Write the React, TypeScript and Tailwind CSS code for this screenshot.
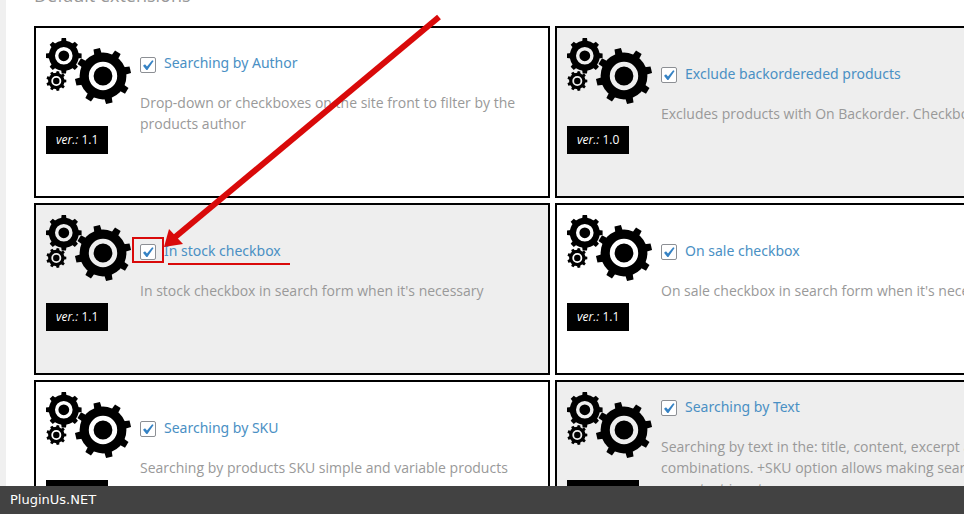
import { useState } from "react";

type Extension = {
  id: string;
  title: string;
  text: string;
  version: string;
  shaded?: boolean;
};

const EXTENSIONS: Extension[] = [
  { id: "author", title: "Searching by Author", text: "Drop-down or checkboxes on the site front to filter by the products author", version: "1.1" },
  { id: "backorder", title: "Exclude backordereded products", text: "Excludes products with On Backorder. Checkbox in form", version: "1.0", shaded: true },
  { id: "stock", title: "In stock checkbox", text: "In stock checkbox in search form when it's necessary", version: "1.1", shaded: true },
  { id: "sale", title: "On sale checkbox", text: "On sale checkbox in search form when it's necessary", version: "1.1" },
  { id: "sku", title: "Searching by SKU", text: "Searching by products SKU simple and variable products", version: "1.1" },
  { id: "text", title: "Searching by Text", text: "Searching by text in the: title, content, excerpt and their combinations. +SKU option allows making search using the same text input", version: "1.1.1", shaded: true },
];

type GearProps = { cx: number; cy: number; r: number; tip: number; tooth: number; ring: number; stroke: number; teeth: number; turn: number };

// The ring is cut out with a mask so that the card colour shows through it.
function Gear({ cx, cy, r, tip, tooth, ring, stroke, teeth, turn }: GearProps) {
  const maskId = `ring-${cx}-${cy}`;
  return (
    <g transform={`translate(${cx} ${cy})`}>
      <mask id={maskId} maskUnits="userSpaceOnUse" x={-tip - 2} y={-tip - 2} width={tip * 2 + 4} height={tip * 2 + 4}>
        <rect x={-tip - 2} y={-tip - 2} width={tip * 2 + 4} height={tip * 2 + 4} fill="#fff" />
        <circle r={ring} fill="none" stroke="#000" strokeWidth={stroke} />
      </mask>
      <g mask={`url(#${maskId})`}>
        <circle r={r} />
        {Array.from({ length: teeth }, (_, i) => (
          <path
            key={i}
            d={`M${-tooth / 2 - 0.5} ${-r + 1.5}L${-tooth / 2} ${-tip}H${tooth / 2}L${tooth / 2 + 0.5} ${-r + 1.5}Z`}
            transform={`rotate(${turn + (i * 360) / teeth})`}
          />
        ))}
      </g>
    </g>
  );
}

function Gears() {
  return (
    <svg viewBox="0 0 85 66" className="h-[66px] w-[85px]" aria-hidden="true">
      <Gear cx={17.8} cy={17.8} r={15} tip={17.8} tooth={4.4} ring={7.1} stroke={3.4} teeth={8} turn={0} />
      <Gear cx={10.3} cy={43} r={8.2} tip={10} tooth={2.6} ring={4.1} stroke={1.8} teeth={9} turn={10} />
      <Gear cx={57} cy={38} r={23.4} tip={28} tooth={6.6} ring={11.8} stroke={4.8} teeth={8} turn={-13} />
    </svg>
  );
}

// Hand-drawn style pointer: box round the tick box, underline and arrow.
function Pointer() {
  return (
    <>
      <span className="pointer-events-none absolute -top-[7px] -left-2 h-[26px] w-8 border-2 border-[#d90a0a]" />
      <span className="pointer-events-none absolute top-[19px] left-7 h-0.5 w-[122px] bg-[#d90a0a]" />
      <svg viewBox="0 0 280 236" className="pointer-events-none absolute -top-[230px] left-[22px] z-10 h-[236px] w-[280px]" aria-hidden="true">
        <path d="M277 3L12 224" stroke="#d90a0a" strokeWidth="6" />
        <path d="M2 233L7 215L21 230Z" fill="#d90a0a" />
      </svg>
    </>
  );
}

function ExtensionCard({ ext, checked, onToggle }: { ext: Extension; checked: boolean; onToggle: () => void }) {
  return (
    <li className={`min-h-[172px] border-2 border-black p-2.5 ${ext.shaded ? "bg-[#eeeeee]" : "bg-white"}`}>
      <div className="flex items-center gap-[9px]">
        <div className="flex shrink-0 flex-col items-start gap-[22px]">
          <Gears />
          <span className="bg-black px-2.5 text-xs leading-7 text-white">
            <em>ver.:</em> {ext.version}
          </span>
        </div>
        <div className="min-w-0 pb-1.5">
          <div className="relative flex items-center gap-2">
            <span className="relative top-0.5 grid h-4 w-4 shrink-0">
              <input
                id={ext.id}
                type="checkbox"
                checked={checked}
                onChange={onToggle}
                className="col-start-1 row-start-1 h-4 w-4 appearance-none rounded-[2px] border border-[#8c8f94] bg-white"
              />
              {checked && (
                <svg viewBox="0 0 16 16" className="pointer-events-none col-start-1 row-start-1 h-4 w-4" aria-hidden="true">
                  <path d="M3 8.8L5 7.3L7 9.5L12.2 3.2L13.6 4L7.4 13H6.4Z" fill="#3582c4" />
                </svg>
              )}
              {ext.id === "stock" && <Pointer />}
            </span>
            <label htmlFor={ext.id} className="font-['Noto_Sans',sans-serif] text-[#4a90c4]">{ext.title}</label>
          </div>
          <p className="mt-[19px] text-[#999999]">{ext.text}</p>
        </div>
      </div>
    </li>
  );
}

export default function App() {
  const [enabled, setEnabled] = useState<string[]>(EXTENSIONS.map((ext) => ext.id));

  const toggle = (id: string) =>
    setEnabled((ids) => (ids.includes(id) ? ids.filter((item) => item !== id) : [...ids, id]));

  return (
    <div className="flex h-screen flex-col overflow-hidden bg-[#f0f0f0] font-['Open_Sans',sans-serif] text-sm leading-[21px]">
      <main className="ml-1.5 min-h-0 flex-1 overflow-hidden bg-white pl-7">
        <h2 className="-mt-[17px] mb-[19px] text-lg leading-6 text-[#999999]">Default extensions</h2>
        <ul className="grid grid-cols-[repeat(2,minmax(516px,1fr))] gap-[5px]">
          {EXTENSIONS.map((ext) => (
            <ExtensionCard key={ext.id} ext={ext} checked={enabled.includes(ext.id)} onToggle={() => toggle(ext.id)} />
          ))}
        </ul>
      </main>
      <footer className="bg-[#424242] px-2.5 font-['DejaVu_Sans',sans-serif] text-[13px] leading-7 text-white">PluginUs.NET</footer>
    </div>
  );
}
